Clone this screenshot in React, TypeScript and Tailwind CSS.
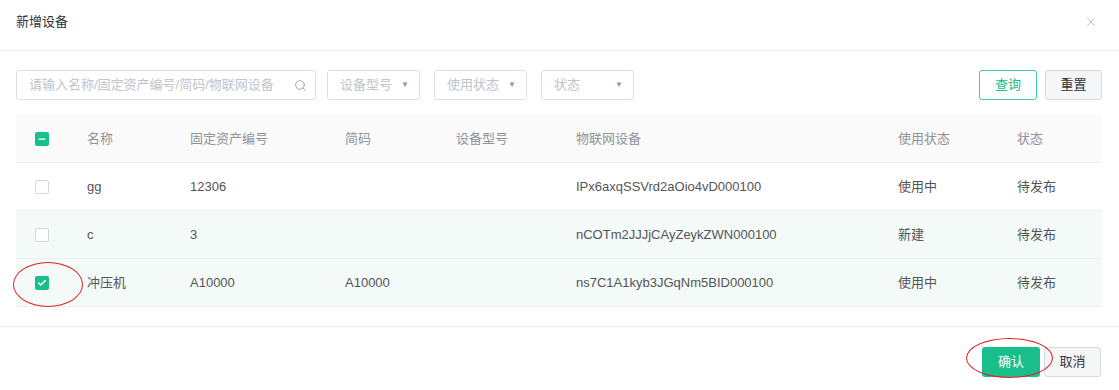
import React from 'react';
import { Search, X, Check, Minus } from 'lucide-react';

const cols = 'grid grid-cols-[56px_103px_155px_111px_120px_322px_119px_100px]';

const rows = [
  { name: 'gg', code: '12306', short: '', model: '', iot: 'IPx6axqSSVrd2aOio4vD000100', use: '使用中', status: '待发布', checked: false, bg: 'bg-white' },
  { name: 'c', code: '3', short: '', model: '', iot: 'nCOTm2JJJjCAyZeykZWN000100', use: '新建', status: '待发布', checked: false, bg: 'bg-[#f3faf8]' },
  { name: '冲压机', code: 'A10000', short: 'A10000', model: '', iot: 'ns7C1A1kyb3JGqNm5BID000100', use: '使用中', status: '待发布', checked: true, bg: 'bg-[#f3faf8]' },
];

const SelectBox: React.FC<{ label: string; width: string }> = ({ label, width }) => (
  <div className={`${width} h-[30px] border border-[#dcdfe6] rounded-[3px] flex items-center justify-between pl-[12px] pr-[10px] text-[#c0c4cc]`}>
    <span>{label}</span>
    <span className="text-[8px] text-[#909399]">▼</span>
  </div>
);

const App: React.FC = () => {
  return (
    <div className="w-[1119px] h-[390px] bg-white relative text-[13px] font-['Liberation_Sans','Noto_Sans_CJK_SC',sans-serif]">
      {/* Header */}
      <div className="h-[51px] border-b border-[#ebeef5] flex items-center justify-between pl-[16px] pr-[21px] pb-[6px]">
        <span className="text-[#303133]">新增设备</span>
        <X className="w-[14px] h-[14px] text-[#aeb1b6]" strokeWidth={1.4} />
      </div>

      {/* Body */}
      <div className="pl-[16px] pr-[17px] pt-[19px] pb-[19px] border-b border-[#ebeef5]">
        <div className="flex items-center">
          <div className="w-[300px] h-[30px] border border-[#dcdfe6] rounded-[3px] flex items-center justify-between pl-[12px] pr-[8px] text-[#c0c4cc]">
            <span>请输入名称/固定资产编号/简码/物联网设备</span>
            <Search className="w-[13px] h-[13px] text-[#909399]" strokeWidth={1.5} />
          </div>
          <div className="ml-[11px] flex gap-[14px]">
            <SelectBox label="设备型号" width="w-[93px]" />
            <SelectBox label="使用状态" width="w-[93px]" />
            <SelectBox label="状态" width="w-[93px]" />
          </div>
          <div className="ml-auto flex gap-[8px]">
            <button className="w-[58px] h-[30px] border border-[#3fcf9d] rounded-[3px] text-[#19be8b] bg-white">查询</button>
            <button className="w-[57px] h-[30px] border border-[#d8dadf] rounded-[3px] text-[#333] bg-[#f5f6f7]">重置</button>
          </div>
        </div>

        {/* Table */}
        <div className="mt-[15px]">
          <div className={`${cols} h-[48px] items-center bg-[#fafafa] border-b border-[#ebeef5] text-[#909399]`}>
            <div className="pl-[19px]">
              <div className="w-[14px] h-[14px] rounded-[2px] bg-[#19be8b] flex items-center justify-center">
                <Minus className="w-[10px] h-[10px] text-white" strokeWidth={3} />
              </div>
            </div>
            <div className="pl-[15px]">名称</div>
            <div className="pl-[15px]">固定资产编号</div>
            <div className="pl-[15px]">简码</div>
            <div className="pl-[15px]">设备型号</div>
            <div className="pl-[15px]">物联网设备</div>
            <div className="pl-[15px]">使用状态</div>
            <div className="pl-[15px]">状态</div>
          </div>
          {rows.map((r, i) => (
            <div key={i} className={`${cols} h-[48px] items-center border-b border-[#ebeef5] text-[#555] ${r.bg}`}>
              <div className="pl-[19px]">
                {r.checked ? (
                  <div className="w-[14px] h-[14px] rounded-[2px] bg-[#19be8b] flex items-center justify-center">
                    <Check className="w-[10px] h-[10px] text-white" strokeWidth={3.5} />
                  </div>
                ) : (
                  <div className="w-[14px] h-[14px] rounded-[2px] border border-[#d4d7dd] bg-white" />
                )}
              </div>
              <div className="pl-[15px]">{r.name}</div>
              <div className="pl-[15px]">{r.code}</div>
              <div className="pl-[15px]">{r.short}</div>
              <div className="pl-[15px]">{r.model}</div>
              <div className="pl-[15px]">{r.iot}</div>
              <div className="pl-[15px]">{r.use}</div>
              <div className="pl-[15px]">{r.status}</div>
            </div>
          ))}
        </div>
      </div>

      {/* Footer */}
      <div className="flex justify-end gap-[4px] pr-[18px] pt-[20px]">
        <button className="w-[58px] h-[30px] rounded-[3px] bg-[#19be8b] text-white">确认</button>
        <button className="w-[57px] h-[30px] border border-[#d8dadf] rounded-[3px] text-[#333] bg-[#f5f6f7]">取消</button>
      </div>

      {/* Annotation ellipses */}
      <div className="absolute left-[13px] top-[262px] w-[70px] h-[45px] rounded-[50%] border-[1.5px] border-[#e02020] pointer-events-none" />
      <div className="absolute left-[966px] top-[338px] w-[87px] h-[40px] rounded-[50%] border-[1.5px] border-[#e02020] pointer-events-none" />
    </div>
  );
};

export default App;
